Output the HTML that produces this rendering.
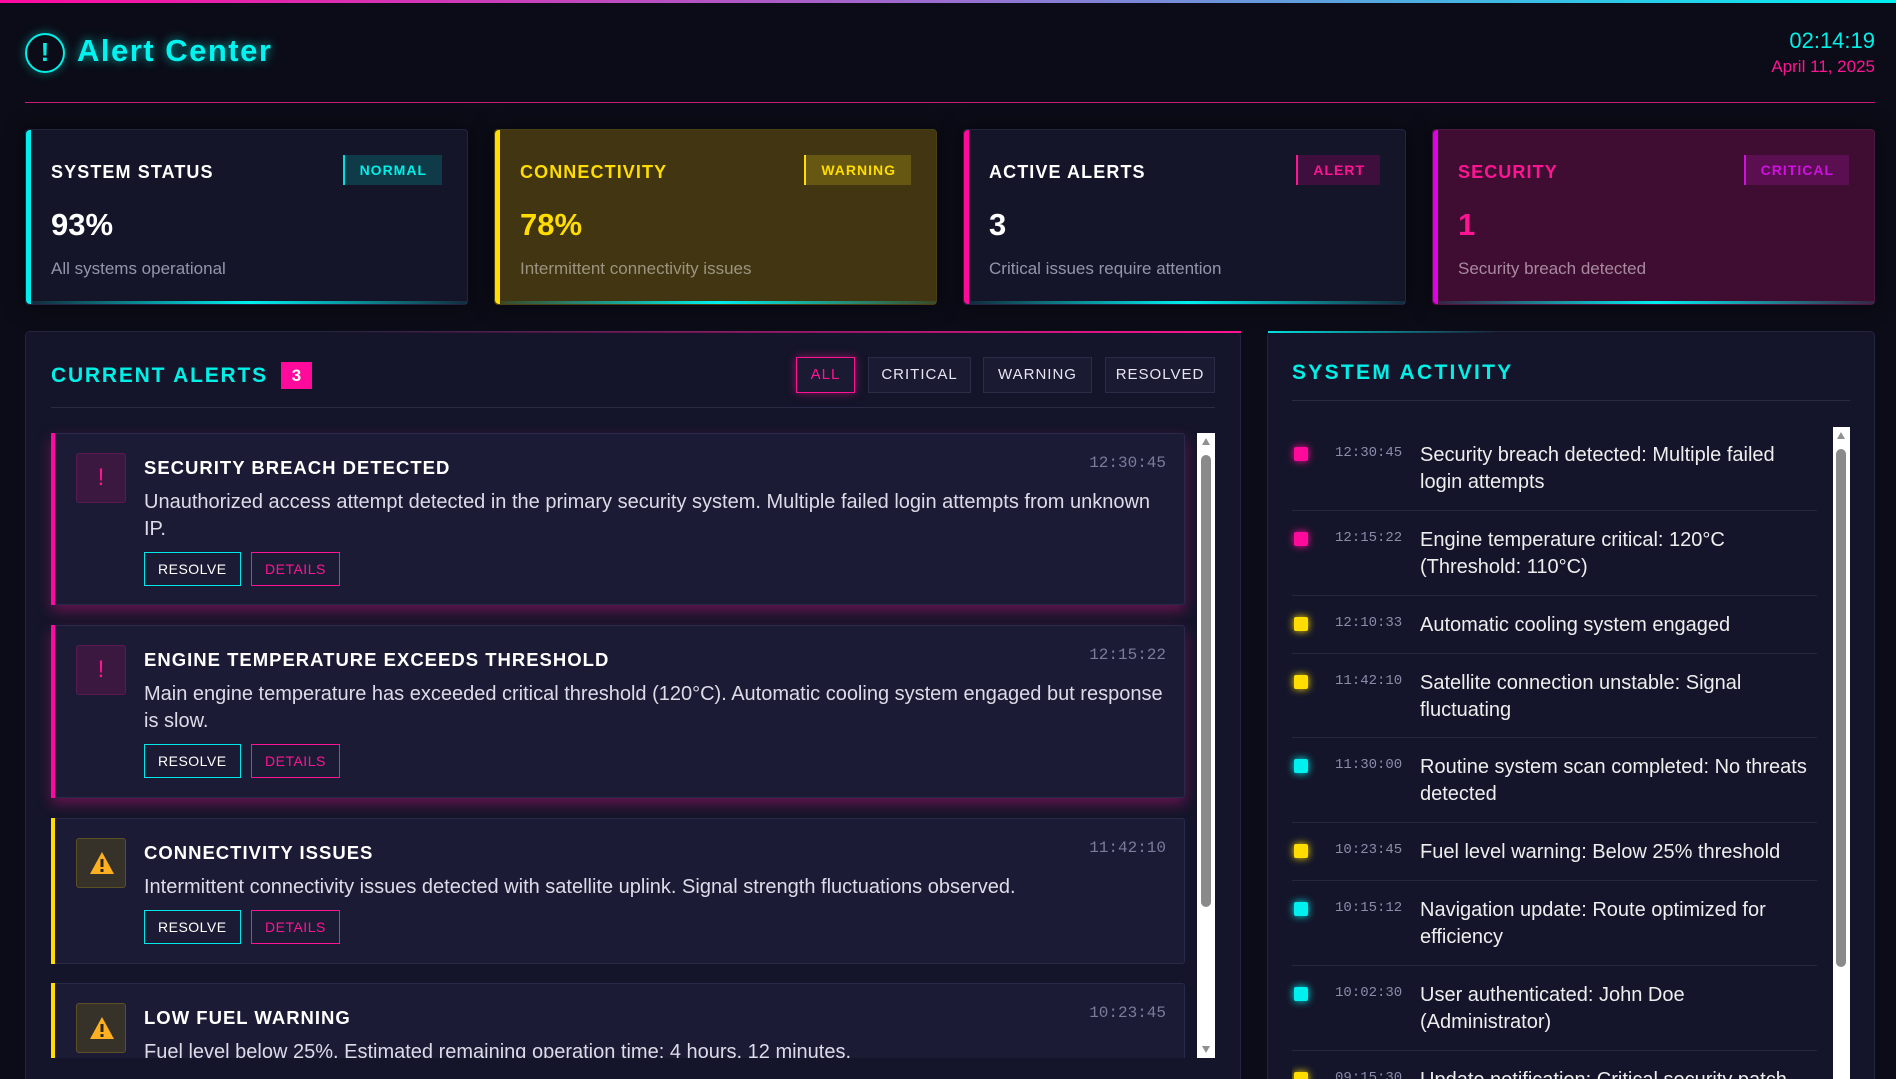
<!DOCTYPE html>
<html><head><meta charset="utf-8">
<style>
*{box-sizing:border-box;margin:0;padding:0}
html,body{width:1896px;height:1079px;overflow:hidden}
body{background:#0b0c17;font-family:"Liberation Sans",sans-serif;color:#fff}
#wrap{position:relative;width:1896px;height:1079px;overflow:hidden}
.abs{position:absolute}
.topbar{left:0;top:0;width:1896px;height:3px;background:linear-gradient(90deg,#ff0aa0,#9a6fd0 50%,#00f0f0)}
.logo{left:25px;top:33px;width:40px;height:40px;border:2.5px solid #00f0e8;border-radius:50%;color:#00f0e8;font-weight:bold;font-size:26px;text-align:center;line-height:35px;box-shadow:0 0 10px rgba(0,240,232,.4)}
.title{left:77px;top:33px;font-size:31px;font-weight:bold;color:#00f5f0;letter-spacing:1.5px;text-shadow:0 0 10px rgba(0,245,240,.7)}
.time{right:21px;top:28px;font-size:22px;color:#00f0e8;text-align:right}
.date{right:21px;top:57px;font-size:17px;color:#ff1493;text-align:right}
.hline{left:25px;top:102px;width:1850px;height:1px;background:#c81a7a}
.card{top:129px;width:443px;height:176px;background:#151529;border:1px solid #232540;border-radius:4px;box-shadow:0 0 20px rgba(0,0,0,.5)}
.card .lb{position:absolute;left:0;top:0;bottom:0;width:5px;border-radius:4px 0 0 4px}
.card .bl{position:absolute;left:6px;right:0;bottom:0;height:3px;background:linear-gradient(90deg,rgba(0,240,240,.1),#00f0f0 50%,rgba(0,240,240,.1))}
.card .ct{position:absolute;left:25px;top:32px;font-size:18px;letter-spacing:1.1px;font-weight:bold}
.card .bd{position:absolute;right:25px;top:25px;height:30px;padding:0 15px;font-size:14px;font-weight:bold;letter-spacing:1px;line-height:30px;border-left:2px solid}
.card .val{position:absolute;left:25px;top:77px;font-size:31px;font-weight:bold}
.card .ds{position:absolute;left:25px;top:129px;font-size:17px;color:#9494ac}
.panel{top:331px;height:748px;background:#14152a;border:1px solid #23253f;border-bottom:0;border-radius:5px 5px 0 0}
.ph{font-size:21px;font-weight:bold;color:#00f0e8;letter-spacing:1.8px}
.fb{top:357px;height:36px;border:1px solid #2a2c48;background:#1a1b33;font-size:15px;letter-spacing:1px;line-height:34px;text-align:center;color:#e6e6f0}
.alert{left:51px;width:1134px;background:#1c1b35;border:1px solid #282a48;border-radius:3px}
.alert .lb{position:absolute;left:-1px;top:-1px;bottom:-1px;width:4px}
.alert .ic{position:absolute;left:24px;top:19px;width:50px;height:50px;border:1px solid;border-radius:3px;text-align:center;line-height:48px;font-size:24px}
.alert .ic svg{position:absolute;left:12px;top:12px}
.alert .at{position:absolute;left:92px;top:23px;font-size:18.5px;font-weight:bold;letter-spacing:1px}
.alert .tm{position:absolute;right:18px;top:20px;font-family:"Liberation Mono",monospace;font-size:16px;color:#7a7c9c}
.alert .de{position:absolute;left:92px;top:55px;width:1030px;font-size:20px;line-height:27px;color:#dcdce8}
.btn{position:absolute;left:92px;height:34px;padding:0 13px;line-height:32px;font-size:14px;letter-spacing:.5px}
.r{border:1px solid #00e8e8;color:#fff}
.d{border:1px solid #ff1493;color:#ff1493;padding:0 13px}
.sb{background:#fff}
.act{left:1292px;width:525px;border-bottom:1px solid #262842}
.act .dot{position:absolute;left:2px;width:14px;height:14px;border-radius:2px}
.act .t{position:absolute;left:43px;font-family:"Liberation Mono",monospace;font-size:14px;color:#8a8cab}
.act .x{position:absolute;left:128px;width:390px;font-size:20px;line-height:27px;color:#eee}
</style></head><body><div id="wrap">
<div class="abs topbar"></div>
<div class="abs logo">!</div>
<div class="abs title">Alert Center</div>
<div class="abs time">02:14:19</div>
<div class="abs date">April 11, 2025</div>
<div class="abs hline"></div>

<div class="abs card" style="left:25px"><div class="lb" style="background:#00f0f0"></div><div class="ct">SYSTEM STATUS</div><div class="bd" style="color:#00f0e8;border-color:#00e0e0;background:#0f3a48">NORMAL</div><div class="val">93%</div><div class="ds">All systems operational</div><div class="bl"></div></div>
<div class="abs card" style="left:494px;background:#413611;border-color:#4a4018"><div class="lb" style="background:#ffdd00"></div><div class="ct" style="color:#ffdd00">CONNECTIVITY</div><div class="bd" style="color:#ffdd00;border-color:#ffdd00;background:#665812">WARNING</div><div class="val" style="color:#ffdd00">78%</div><div class="ds" style="color:#9c9480">Intermittent connectivity issues</div><div class="bl"></div></div>
<div class="abs card" style="left:963px"><div class="lb" style="background:#ff0a9a"></div><div class="ct">ACTIVE ALERTS</div><div class="bd" style="color:#ff1493;border-color:#ff1493;background:#3e0f3c">ALERT</div><div class="val">3</div><div class="ds">Critical issues require attention</div><div class="bl"></div></div>
<div class="abs card" style="left:1432px;background:#3f0d31;border-color:#4a1840"><div class="lb" style="background:#e000e8"></div><div class="ct" style="color:#ff1493">SECURITY</div><div class="bd" style="color:#d010e0;border-color:#d010e0;background:#5a0f50">CRITICAL</div><div class="val" style="color:#ff1493">1</div><div class="ds" style="color:#a88aa0">Security breach detected</div><div class="bl"></div></div>

<div class="abs panel" style="left:25px;width:1216px"></div>
<div class="abs" style="left:330px;top:331px;width:911px;height:2px;background:linear-gradient(90deg,rgba(255,20,147,0),#ff1493)"></div>
<div class="abs ph" style="left:51px;top:364px">CURRENT ALERTS</div>
<div class="abs" style="left:281px;top:362px;width:31px;height:27px;background:#ff0a9a;color:#fff;font-weight:bold;font-size:17px;text-align:center;line-height:27px">3</div>
<div class="abs fb" style="left:796px;width:59px;border-color:#ff1493;color:#ff1493;box-shadow:0 0 8px rgba(255,20,147,.5)">ALL</div>
<div class="abs fb" style="left:868px;width:103px">CRITICAL</div>
<div class="abs fb" style="left:983px;width:109px">WARNING</div>
<div class="abs fb" style="left:1105px;width:110px">RESOLVED</div>
<div class="abs" style="left:51px;top:407px;width:1164px;height:1px;background:#2a2c45"></div>

<div class="abs alert" style="top:433px;height:172px;box-shadow:0 6px 14px rgba(255,20,147,.35)"><div class="lb" style="background:#ff0aa0"></div><div class="ic" style="border-color:#5a1a50;background:#3a1840;color:#ff1493">!</div><div class="at">SECURITY BREACH DETECTED</div><div class="tm">12:30:45</div><div class="de">Unauthorized access attempt detected in the primary security system. Multiple failed login attempts from unknown IP.</div><div class="btn r" style="top:118px">RESOLVE</div><div class="btn d" style="top:118px;left:199px">DETAILS</div></div>
<div class="abs alert" style="top:625px;height:173px;box-shadow:0 6px 14px rgba(255,20,147,.35)"><div class="lb" style="background:#ff0aa0"></div><div class="ic" style="border-color:#5a1a50;background:#3a1840;color:#ff1493">!</div><div class="at">ENGINE TEMPERATURE EXCEEDS THRESHOLD</div><div class="tm">12:15:22</div><div class="de">Main engine temperature has exceeded critical threshold (120°C). Automatic cooling system engaged but response is slow.</div><div class="btn r" style="top:118px">RESOLVE</div><div class="btn d" style="top:118px;left:199px">DETAILS</div></div>
<div class="abs alert" style="top:818px;height:146px"><div class="lb" style="background:#ffdd00"></div><div class="ic" style="border-color:#5a5024;background:#36322a"><svg width="26" height="24" viewBox="0 0 26 24"><path d="M13 1 L25 23 L1 23 Z" fill="#ffb020"/><rect x="11.5" y="8" width="3" height="8" fill="#2a2620"/><rect x="11.5" y="18" width="3" height="3" fill="#2a2620"/></svg></div><div class="at">CONNECTIVITY ISSUES</div><div class="tm">11:42:10</div><div class="de">Intermittent connectivity issues detected with satellite uplink. Signal strength fluctuations observed.</div><div class="btn r" style="top:91px">RESOLVE</div><div class="btn d" style="top:91px;left:199px">DETAILS</div></div>
<div class="abs" style="left:51px;top:983px;width:1134px;height:75px;overflow:hidden"><div class="alert" style="position:absolute;left:0;top:0;height:150px"><div class="lb" style="background:#ffdd00"></div><div class="ic" style="border-color:#5a5024;background:#36322a"><svg width="26" height="24" viewBox="0 0 26 24"><path d="M13 1 L25 23 L1 23 Z" fill="#ffb020"/><rect x="11.5" y="8" width="3" height="8" fill="#2a2620"/><rect x="11.5" y="18" width="3" height="3" fill="#2a2620"/></svg></div><div class="at">LOW FUEL WARNING</div><div class="tm">10:23:45</div><div class="de">Fuel level below 25%. Estimated remaining operation time: 4 hours, 12 minutes.</div></div></div>
<div class="abs sb" style="left:1197px;top:433px;width:18px;height:625px"><div style="position:absolute;left:5px;top:5px;border:4px solid transparent;border-bottom:7px solid #909090;border-top:0"></div><div style="position:absolute;left:4px;top:22px;width:10px;height:452px;background:#8a8a8a;border-radius:5px"></div><div style="position:absolute;left:5px;bottom:5px;border:4px solid transparent;border-top:7px solid #909090;border-bottom:0"></div></div>

<div class="abs panel" style="left:1267px;width:608px"></div>
<div class="abs" style="left:1268px;top:331px;width:230px;height:2px;background:linear-gradient(90deg,#00e0e0,rgba(0,224,224,0))"></div>
<div class="abs ph" style="left:1292px;top:361px;letter-spacing:2.3px">SYSTEM ACTIVITY</div>
<div class="abs" style="left:1292px;top:400px;width:558px;height:1px;background:#2a2c45"></div>

<div class="abs" style="left:0;top:427px;width:1896px;height:652px;overflow:hidden">
<div class="abs act" style="top:0;height:84px"><div class="dot" style="top:20px;background:#ff0a9a;box-shadow:0 0 8px #ff0a9a"></div><div class="t" style="top:18px">12:30:45</div><div class="x" style="top:15px">Security breach detected: Multiple failed login attempts</div></div>
<div class="abs act" style="top:84px;height:85px"><div class="dot" style="top:21px;background:#ff0a9a;box-shadow:0 0 8px #ff0a9a"></div><div class="t" style="top:19px">12:15:22</div><div class="x" style="top:16px">Engine temperature critical: 120°C (Threshold: 110°C)</div></div>
<div class="abs act" style="top:169px;height:58px"><div class="dot" style="top:21px;background:#ffdd00;box-shadow:0 0 8px #ffdd00"></div><div class="t" style="top:19px">12:10:33</div><div class="x" style="top:16px">Automatic cooling system engaged</div></div>
<div class="abs act" style="top:227px;height:84px"><div class="dot" style="top:21px;background:#ffdd00;box-shadow:0 0 8px #ffdd00"></div><div class="t" style="top:19px">11:42:10</div><div class="x" style="top:16px">Satellite connection unstable: Signal fluctuating</div></div>
<div class="abs act" style="top:311px;height:85px"><div class="dot" style="top:21px;background:#00f0f0;box-shadow:0 0 8px #00f0f0"></div><div class="t" style="top:19px">11:30:00</div><div class="x" style="top:16px">Routine system scan completed: No threats detected</div></div>
<div class="abs act" style="top:396px;height:58px"><div class="dot" style="top:21px;background:#ffdd00;box-shadow:0 0 8px #ffdd00"></div><div class="t" style="top:19px">10:23:45</div><div class="x" style="top:16px">Fuel level warning: Below 25% threshold</div></div>
<div class="abs act" style="top:454px;height:85px"><div class="dot" style="top:21px;background:#00f0f0;box-shadow:0 0 8px #00f0f0"></div><div class="t" style="top:19px">10:15:12</div><div class="x" style="top:16px">Navigation update: Route optimized for efficiency</div></div>
<div class="abs act" style="top:539px;height:85px"><div class="dot" style="top:21px;background:#00f0f0;box-shadow:0 0 8px #00f0f0"></div><div class="t" style="top:19px">10:02:30</div><div class="x" style="top:16px">User authenticated: John Doe (Administrator)</div></div>
<div class="abs act" style="top:624px;height:28px;border:0;overflow:hidden"><div class="dot" style="top:21px;background:#ffdd00;box-shadow:0 0 8px #ffdd00"></div><div class="t" style="top:19px">09:15:30</div><div class="x" style="top:16px;white-space:nowrap">Update notification: Critical security patch</div></div>
<div class="abs sb" style="left:1833px;top:0;width:17px;height:652px"><div style="position:absolute;left:4px;top:5px;border:4px solid transparent;border-bottom:7px solid #909090;border-top:0"></div><div style="position:absolute;left:3px;top:22px;width:10px;height:518px;background:#8a8a8a;border-radius:5px"></div></div>
</div>
</div></body></html>
